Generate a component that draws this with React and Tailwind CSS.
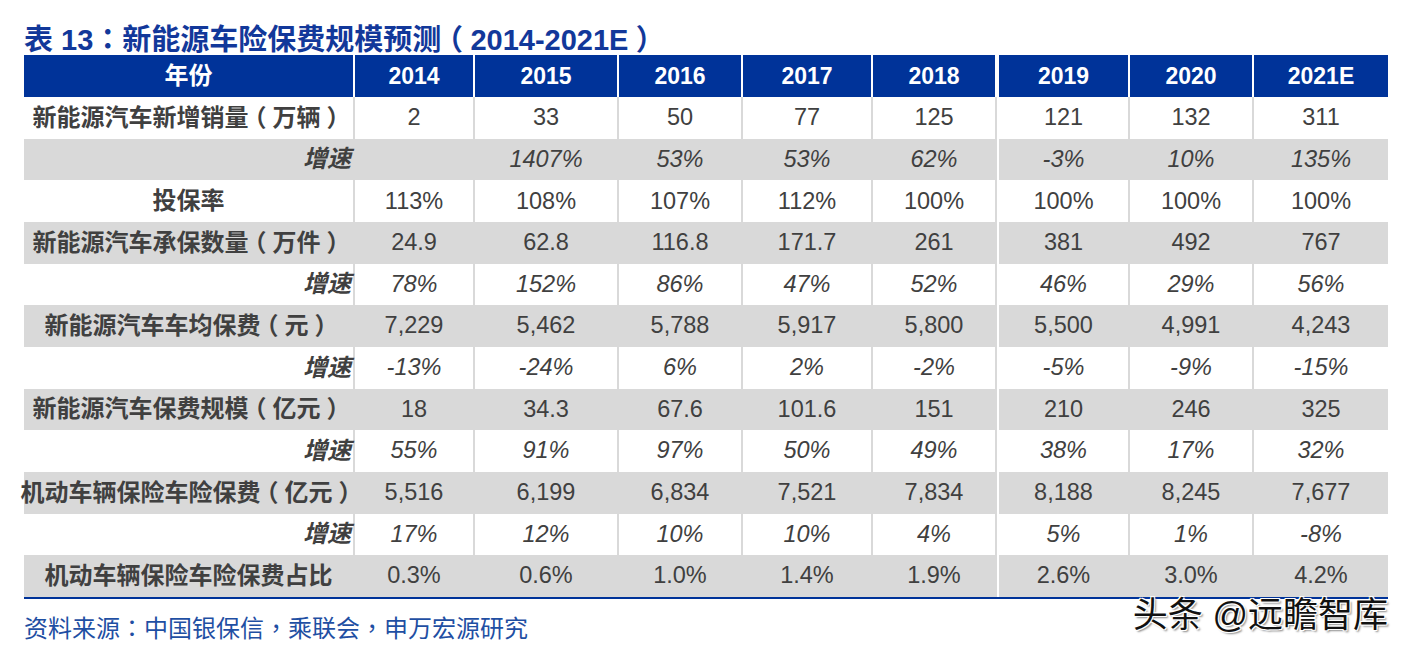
import React from "react";

const rows = [
  { label: "新能源汽车新增销量（万辆）", vals: ["2", "33", "50", "77", "125", "121", "132", "311"] },
  { label: "增速", sp: true, vals: ["", "1407%", "53%", "53%", "62%", "-3%", "10%", "135%"] },
  { label: "投保率", vals: ["113%", "108%", "107%", "112%", "100%", "100%", "100%", "100%"] },
  { label: "新能源汽车承保数量（万件）", vals: ["24.9", "62.8", "116.8", "171.7", "261", "381", "492", "767"] },
  { label: "增速", sp: true, vals: ["78%", "152%", "86%", "47%", "52%", "46%", "29%", "56%"] },
  { label: "新能源汽车车均保费（元）", vals: ["7,229", "5,462", "5,788", "5,917", "5,800", "5,500", "4,991", "4,243"] },
  { label: "增速", sp: true, vals: ["-13%", "-24%", "6%", "2%", "-2%", "-5%", "-9%", "-15%"] },
  { label: "新能源汽车保费规模（亿元）", vals: ["18", "34.3", "67.6", "101.6", "151", "210", "246", "325"] },
  { label: "增速", sp: true, vals: ["55%", "91%", "97%", "50%", "49%", "38%", "17%", "32%"] },
  { label: "机动车辆保险车险保费（亿元）", vals: ["5,516", "6,199", "6,834", "7,521", "7,834", "8,188", "8,245", "7,677"] },
  { label: "增速", sp: true, vals: ["17%", "12%", "10%", "10%", "4%", "5%", "1%", "-8%"] },
  { label: "机动车辆保险车险保费占比", vals: ["0.3%", "0.6%", "1.0%", "1.4%", "1.9%", "2.6%", "3.0%", "4.2%"] },
];

const years = ["2014", "2015", "2016", "2017", "2018", "2019", "2020", "2021E"];

const gridCols =
  "grid grid-cols-[329px_118px_142px_122px_128px_122px_131px_122px_134px] gap-x-[2px]";

// Full-width punctuation drawn centred in its em box, as in the reference font.
function T({ text }) {
  const parts = [];
  let buf = "";
  const flush = (k) => {
    if (buf) {
      parts.push(<React.Fragment key={"t" + k}>{buf}</React.Fragment>);
      buf = "";
    }
  };
  [...text].forEach((ch, i) => {
    if (ch === "（" || ch === "）") {
      flush(i);
      parts.push(
        <span key={i} className="inline-block px-[0.25em] [font-feature-settings:'halt']">
          {ch}
        </span>
      );
    } else if (ch === "：" || ch === "，") {
      flush(i);
      parts.push(
        <span key={i} className="font-['Noto_Sans_CJK_TC']">
          {ch}
        </span>
      );
    } else {
      buf += ch;
    }
  });
  flush("end");
  return <>{parts}</>;
}

export default function App() {
  return (
    <div
      className="relative w-[1409px] h-[653px] bg-white overflow-hidden pl-[24px]"
      style={{ fontFamily: '"Liberation Sans", "Noto Sans CJK SC", sans-serif' }}
    >
      <div className="h-[55px] pt-[20px] text-[29px] leading-[35px] font-bold text-[#12389a] whitespace-nowrap">
        <T text="表 13：新能源车险保费规模预测（2014-2021E）" />
      </div>

      <div className="w-[1364px]">
        <div className={`${gridCols} bg-white h-[42px]`}>
          <div className="bg-[#003399] flex items-center justify-center text-white font-bold text-[24px]">
            年份
          </div>
          {years.map((y, i) => (
            <div
              key={y}
              className={`bg-[#003399] flex items-center justify-center text-white font-bold text-[23px] ${
                i === 5 ? "border-l-2 border-white" : ""
              }`}
            >
              {y}
            </div>
          ))}
        </div>

        {rows.map((r, ri) => {
          const gray = ri % 2 === 1;
          const cellBg = gray ? "bg-[#d9d9d9]" : "bg-white";
          return (
            <div key={ri} className={`${gridCols} bg-[#d9d9d9] h-[41.67px]`}>
              <div
                className={`${cellBg} flex items-center ${
                  r.sp ? "justify-end pr-[2px] italic" : "justify-center"
                } font-bold text-[24px] text-[#404040] whitespace-nowrap`}
              >
                <span>
                  <T text={r.label} />
                </span>
              </div>
              {r.vals.map((v, i) => (
                <div
                  key={i}
                  className={`${cellBg} flex items-center justify-center text-[23.5px] text-[#404040] whitespace-nowrap ${
                    r.sp ? "italic" : ""
                  } ${i === 5 ? "border-l-2 border-white" : ""}`}
                >
                  {v}
                </div>
              ))}
            </div>
          );
        })}
        <div className="h-[2px] bg-[#003399]" />
      </div>

      <div className="mt-[12px] text-[24px] leading-[32px] text-[#1f4fa3] whitespace-nowrap">
        <T text="资料来源：中国银保信，乘联会，申万宏源研究" />
      </div>

      <div className="absolute right-[21px] top-[592px] text-[35px] leading-[46px] text-[#111] whitespace-nowrap [text-shadow:1px_1px_0_#fff,-1px_-1px_0_#fff,1px_-1px_0_#fff,-1px_1px_0_#fff,2px_2px_2px_#888]">
        头条 @远瞻智库
      </div>
    </div>
  );
}
